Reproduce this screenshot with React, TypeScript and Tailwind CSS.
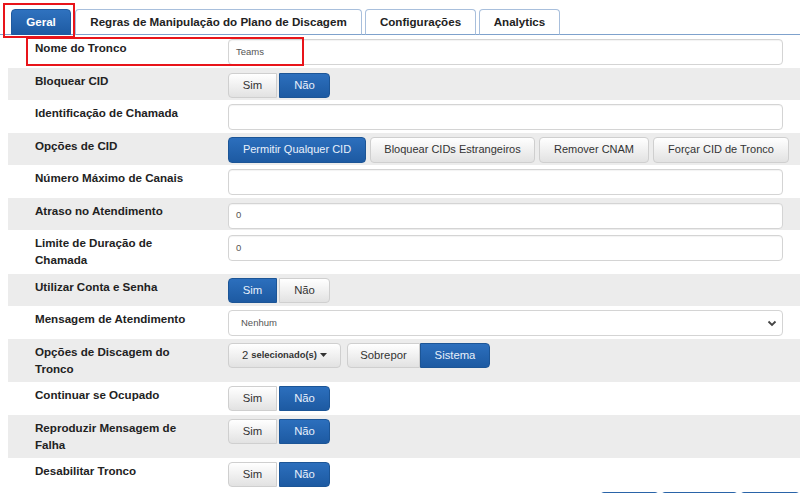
import React from "react";

const font = "font-['Liberation_Sans',Arial,sans-serif]";

const tabs = [
  { name: "Geral", w: "w-[60px]", active: true },
  { name: "Regras de Manipulação do Plano de Discagem", w: "w-[287px]" },
  { name: "Configurações", w: "w-[111px]" },
  { name: "Analytics", w: "w-[81px]" },
];

const btnDefault =
  "bg-linear-to-b from-[#ffffff] to-[#e2e2e2] border border-[#cfcfcf] text-[#333]";
const btnActive =
  "bg-linear-to-b from-[#2c6fbd] to-[#1d5aa2] border border-[#1c5596] text-[#e8f0fb]";

function Row({
  label,
  gray,
  tall,
  children,
}: {
  label: string;
  gray?: boolean;
  tall?: boolean;
  children?: React.ReactNode;
}) {
  return (
    <div
      className={`flex ${gray ? "bg-[#ececec]" : "bg-white"} ${
        tall ? "h-[43.5px]" : "h-[32.5px]"
      }`}
    >
      <div className="w-[220px] shrink-0 pl-[27px] pr-[28px] pt-[4px] text-[11.6px] font-bold leading-[17px] text-[#222]">
        {label}
      </div>
      <div className="flex-1 pt-[4px] pr-[17px]">{children}</div>
    </div>
  );
}

function TextInput({ value }: { value?: string }) {
  return (
    <div className="flex h-[26px] w-full items-center rounded-[4px] border border-[#d4d4d4] bg-white px-[7px] text-[9.5px] text-[#555] shadow-[inset_0_1px_1px_rgba(0,0,0,0.05)]">
      {value}
    </div>
  );
}

function YesNo({ yes }: { yes?: boolean }) {
  return (
    <div className="flex gap-[2px] text-[11.3px]">
      <div
        className={`flex h-[25px] w-[49px] items-center justify-center rounded-l-[4px] ${
          yes ? btnActive : btnDefault
        }`}
      >
        Sim
      </div>
      <div
        className={`flex h-[25px] w-[51px] items-center justify-center rounded-r-[4px] ${
          yes ? btnDefault : btnActive
        }`}
      >
        Não
      </div>
    </div>
  );
}

export default function App() {
  return (
    <div className={`relative h-[493px] w-[800px] overflow-hidden bg-white ${font}`}>
      {/* tabs */}
      <div className="flex h-[35px] items-end gap-[3px] border-b border-[#7fa2cd] pl-[11px]">
        {tabs.map((t) => (
          <div
            key={t.name}
            className={`${t.w} -mb-px flex h-[26px] items-center justify-center rounded-t-[4px] text-[11.6px] font-bold ${
              t.active
                ? "mr-[1px] border border-[#1f5a9f] bg-linear-to-b from-[#2f72bf] to-[#1e5ba3] text-white"
                : "border border-[#a8bfdc] border-b-[#7fa2cd] bg-white text-[#222]"
            }`}
          >
            {t.name}
          </div>
        ))}
      </div>

      {/* form */}
      <div className="pl-[8px]">
        <Row label="Nome do Tronco">
          <TextInput value="Teams" />
        </Row>
        <Row label="Bloquear CID" gray>
          <div className="pt-[1px]">
            <YesNo />
          </div>
        </Row>
        <Row label="Identificação de Chamada">
          <TextInput />
        </Row>
        <Row label="Opções de CID" gray>
          <div className="flex gap-[4px] text-[11px]">
            <div className={`flex h-[26px] w-[138px] items-center justify-center rounded-[4px] ${btnActive}`}>
              Permitir Qualquer CID
            </div>
            <div className={`flex h-[26px] w-[165px] items-center justify-center rounded-[4px] ${btnDefault}`}>
              Bloquear CIDs Estrangeiros
            </div>
            <div className={`flex h-[26px] w-[110px] items-center justify-center rounded-[4px] ${btnDefault}`}>
              Remover CNAM
            </div>
            <div className={`flex h-[26px] w-[136px] items-center justify-center rounded-[4px] ${btnDefault}`}>
              Forçar CID de Tronco
            </div>
          </div>
        </Row>
        <Row label="Número Máximo de Canais">
          <TextInput />
        </Row>
        <Row label="Atraso no Atendimento" gray>
          <div className="pt-[1px]">
            <TextInput value="0" />
          </div>
        </Row>
        <Row label="Limite de Duração de Chamada" tall>
          <div className="pt-[1px]">
            <TextInput value="0" />
          </div>
        </Row>
        <Row label="Utilizar Conta e Senha" gray>
          <YesNo yes />
        </Row>
        <Row label="Mensagem de Atendimento">
          <div className="flex h-[26px] w-full items-center justify-between rounded-[4px] border border-[#d4d4d4] bg-white pl-[12px] pr-[5px] text-[9.5px] text-[#555]">
            <span>Nenhum</span>
            <svg width="10" height="10" viewBox="0 0 10 10">
              <path d="M1.5 3.5 L5 7 L8.5 3.5" fill="none" stroke="#444" strokeWidth="1.8" />
            </svg>
          </div>
        </Row>
        <Row label="Opções de Discagem do Tronco" gray tall>
          <div className="flex text-[11.3px]">
            <div className={`flex h-[25px] w-[113px] items-center justify-center gap-[3px] rounded-[4px] ${btnDefault}`}>
              <span>2</span>
              <span className="text-[9.4px] font-bold">selecionado(s)</span>
              <svg width="7" height="5" viewBox="0 0 7 5">
                <path d="M0 0 H7 L3.5 4 Z" fill="#333" />
              </svg>
            </div>
            <div className={`ml-[6px] flex h-[25px] w-[73px] items-center justify-center rounded-l-[4px] ${btnDefault}`}>
              Sobrepor
            </div>
            <div className={`flex h-[25px] w-[70px] items-center justify-center rounded-r-[4px] ${btnActive}`}>
              Sistema
            </div>
          </div>
        </Row>
        <Row label="Continuar se Ocupado">
          <YesNo />
        </Row>
        <Row label="Reproduzir Mensagem de Falha" gray tall>
          <YesNo />
        </Row>
        <Row label="Desabilitar Tronco">
          <YesNo />
        </Row>
        <div className="flex justify-end gap-[2px] pt-[1px]">
          <div className="h-[26px] w-[59px] rounded-[4px] border border-[#2a64a8] bg-[#2f6fb8]" />
          <div className="h-[26px] w-[77px] rounded-[4px] border border-[#2a64a8] bg-[#2f6fb8]" />
          <div className="h-[26px] w-[60px] rounded-[4px] border border-[#2a64a8] bg-[#2f6fb8]" />
        </div>
      </div>

      {/* annotation boxes */}
      <div className="absolute left-[3px] top-[3px] h-[35px] w-[72px] border-2 border-[#e8141a]" />
      <div className="absolute left-[26px] top-[37px] h-[29px] w-[278px] border-2 border-[#e8141a]" />
    </div>
  );
}
